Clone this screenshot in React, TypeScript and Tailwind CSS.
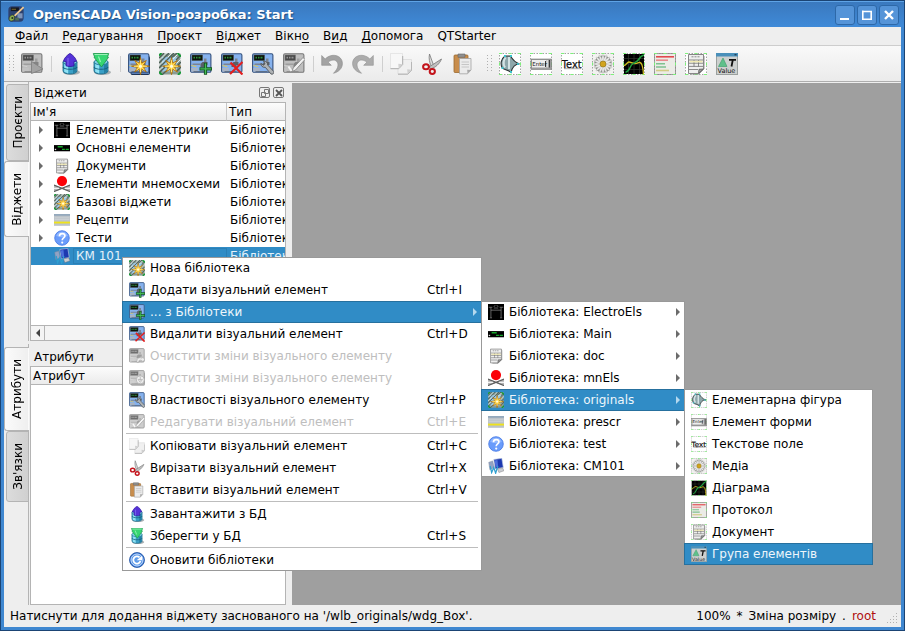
import React from "react";

type IconProps = { className?: string };

const GREEN = "#7df27a";

/* ---------- icon building blocks ---------- */

function Svg({ className = "size-4", children }: IconProps & { children: React.ReactNode }) {
  return (
    <svg viewBox="0 0 22 22" className={`shrink-0 ${className}`} aria-hidden="true">
      {children}
    </svg>
  );
}

function PanelArt() {
  return (
    <>
      <rect x="0.6" y="0.8" width="20.300" height="18.500" rx="1.400" fill="#86b2ee" stroke="#34507c" strokeWidth="1.100" />
      <path d="M1.300 15h6.500v3.700H1.300z" fill="#a9b4c4" />
      <path d="M1.300 12.500l5 1.200" stroke="#d8c860" strokeWidth="1" />
      <rect x="2" y="2" width="10.500" height="5.500" fill="#0c120c" stroke="#47524a" strokeWidth="0.6" />
      <path d="M3.500 4.700h1.500M6 4.700h1.500M8.500 4.700h2" stroke="#2c8f38" strokeWidth="1.800" />
      <path d="M12.500 9h5v3h-2v2h-5v-3z" fill="#5a6068" />
      <path d="M14 5.500h2.500V9H14zM2.500 10.500h8v1.500h-8z" fill="#7c8490" />
      <path d="M3.500 18.500h12" stroke="#5a6a80" strokeWidth="0.9" />
    </>
  );
}

function Star({ x = 12.5, y = 13.2 }: { x?: number; y?: number }) {
  return (
    <g transform={`translate(${x} ${y})`}>
      <path
        d="M0-8.800L1.300-3.100 5.800-5.800 3.100-1.300 9 0 3.100 1.300 5.800 5.800 1.300 3.100 0 8.500-1.300 3.100-5.800 5.800-3.100 1.300-9 0-3.100-1.300-5.800-5.800-1.300-3.100Z"
        fill="#fdc62f"
        stroke="#a8680a"
        strokeWidth="0.8"
      />
      <path d="M0-6V6M-6.500 0H6.500M-3.800-3.800l7.600 7.600M3.800-3.800l-7.600 7.600" stroke="#ffe878" strokeWidth="1" />
      <circle r="1.500" fill="#fffbe0" />
    </g>
  );
}

function Frame() {
  return (
    <>
      <rect x="0.5" y="0.5" width="21" height="21" fill="none" stroke="#a2a2a2" strokeDasharray="1.500 1.500" />
      <path d="M0 .5h3M19 .5h3M0 21.500h3M19 21.500h3M9.500.5h3M9.500 21.500h3M.5 9.500v3M21.500 9.500v3" stroke={GREEN} />
    </>
  );
}

/* ---------- icons ---------- */

const WidgetRun = (p: IconProps) => (
  <Svg {...p}>
    <PanelArt />
    <path d="M10.500 8.500l11.500 7.500-11.500 4.500z" fill="#8a8a8a" stroke="#5c5c5c" strokeWidth="0.9" />
  </Svg>
);

const Cylinder = () => (
  <>
    <ellipse cx="12.500" cy="19.300" rx="8.500" ry="2.700" fill="#a9b0b3" />
    <path d="M4 9v8.800c0 4.300 14 4.300 14 0V9z" fill="#3a9fc6" stroke="#17627f" strokeWidth="0.8" />
    <path d="M5.200 10.500v8.300l4 1.800v-8.500z" fill="#8fe2f4" />
    <path d="M14 12.300v8l3-1.300v-8z" fill="#2580a4" />
    <path d="M4 13.800c1 3.200 13 3.200 14 0" fill="none" stroke="#17627f" strokeWidth="1.100" />
    <ellipse cx="11" cy="9" rx="7" ry="2.800" fill="#7fd0e6" stroke="#1b6d8b" strokeWidth="0.8" />
  </>
);

const DbLoad = (p: IconProps) => (
  <Svg {...p}>
    <Cylinder />
    <path d="M11 .4C13.500 1.800 17 5 17.500 8.300L15 8.500v4.300c-2 .900-6 .900-8 0V8.500l-2.500-.200C5 5 8.500 1.800 11 .4z" fill="#5532d8" stroke="#2d1598" strokeWidth="0.8" />
    <path d="M9 5v7.500" stroke="#7a60ea" strokeWidth="1.300" />
  </Svg>
);

const DbSave = (p: IconProps) => (
  <Svg {...p}>
    <Cylinder />
    <path d="M3.300.500h15.400l-1.200 3.800h1L11.500 14 4 4.300h.700z" fill="#37d672" stroke="#1a9448" strokeWidth="0.8" />
    <path d="M4.500 1.500h13M8.500 3.500L10.500 9" stroke="#9cf2b8" strokeWidth="1.100" />
  </Svg>
);

const LibraryNew = (p: IconProps) => (
  <Svg {...p}>
    <rect x="3" y="3.500" width="18.500" height="18" rx="1" fill="#5a7fb8" stroke="#1f3557" />
    <PanelArt />
    <Star />
  </Svg>
);

const WidgetStar = (p: IconProps) => (
  <Svg {...p}>
    <rect x="0.5" y="0.5" width="21" height="21" fill="#8a9c94" />
    <rect x="3" y="4" width="15" height="14.500" fill="#9ac6e2" />
    <path d="M0 5l5-5M0 10L10 0M4 11L15 0M0 15l5-5M0 20l6-6M12 5l6-5M17 7l5-5M18 13l4-4M3 22l4-4M18 18l4-4" stroke="#4e6057" strokeWidth="1.300" />
    <path d="M0 7.500L7.500 0M0 12.500l5-5M9 4l4-4M14 6l6-6M18 10l4-4M0 17.500l4-4" stroke="#e8f0ea" strokeWidth="1" />
    <path d="M0 2.500L2.500 0M18.500 0L22 3.500M0 19l3 3M19 22l3-3" stroke="#149a34" strokeWidth="1.800" />
    <Star />
  </Svg>
);

const WidgetAdd = (p: IconProps) => (
  <Svg {...p}>
    <PanelArt />
    <path d="M15.500 9.800v12M9.500 15.800h12.500" stroke="#12561f" strokeWidth="3.200" />
    <path d="M15.500 10.600v10.400M10.300 15.800h10.900" stroke="#45bd56" strokeWidth="1.300" />
  </Svg>
);

const WidgetDelete = (p: IconProps) => (
  <Svg {...p}>
    <PanelArt />
    <path d="M9.500 9.500l12 12M21.500 9L9 21" stroke="#e21f1f" strokeWidth="2.200" />
  </Svg>
);

const WidgetProps = (p: IconProps) => (
  <Svg {...p}>
    <PanelArt />
    <path
      d="M11.500 8.300c2.500-.6 4.300 1.200 4.200 3.700l6 6.500c.9 1.600-1.300 3.600-2.800 2.400l-5.600-6.600c-2.500.4-4.600-1.300-4.400-3.900l2.500 1.800 1.600-1.400z"
      fill="#aeb2b5"
      stroke="#4f5458"
      strokeWidth="0.9"
    />
  </Svg>
);

const WidgetEdit = (p: IconProps) => (
  <Svg {...p}>
    <PanelArt />
    <path d="M20 4.500L22 6.500 12.500 17l-3.500 1.500 1.200-3.500z" fill="#f0f0f0" stroke="#666" strokeWidth="0.9" />
    <path d="M5.500 13.500l3 4.500" fill="none" stroke="#f5f5f5" strokeWidth="2" />
  </Svg>
);

const WidgetClear = (p: IconProps) => (
  <Svg {...p}>
    <PanelArt />
    <path d="M11 20c-1-5 2-8 7-6l1-2 3 5-5 2 .5-2c-3-1-4.500 0-4 3z" fill="#e3e3e3" stroke="#777" strokeWidth="0.9" />
  </Svg>
);

const WidgetDown = (p: IconProps) => (
  <Svg {...p}>
    <rect x="3" y="4" width="18.500" height="17" rx="1" fill="#999" stroke="#555" />
    <PanelArt />
    <circle cx="15.500" cy="13.500" r="5.500" fill="#e6e6e6" stroke="#777" />
    <path d="M15.500 9v6M12.500 13l3 4 3-4z" fill="#fff" stroke="#888" strokeWidth="1.200" />
  </Svg>
);

const UNDO_PATH =
  "M.7 2.500v9.800h9.600L7.200 9.300C10.800 5.600 17 6.500 17 12c0 3-2 5.700-4.500 8.300 5-1.300 9-4.800 8.900-10C21.200 2.200 10.500-.6 4.200 6z";

const Undo = (p: IconProps) => (
  <Svg {...p}>
    <path d={UNDO_PATH} fill="#a3a3a3" stroke="#8a8a8a" strokeWidth="0.6" />
  </Svg>
);

const Redo = (p: IconProps) => (
  <Svg {...p}>
    <g transform="translate(22 0) scale(-1 1)">
      <path d={UNDO_PATH} fill="#acacac" stroke="#909090" strokeWidth="0.6" />
    </g>
  </Svg>
);

const Copy = (p: IconProps) => (
  <Svg {...p}>
    <path d="M8 6.500h13.500v10.500L17.500 21H8z" fill="#f0f0f0" stroke="#d8d8d8" strokeWidth="0.7" />
    <path d="M8 21.200h9.800l3.900-4.200V9" fill="none" stroke="#a8a8a8" strokeWidth="0.9" />
    <path d="M21.500 16.800l-4.300-.6.400 4.700z" fill="#cfcfcf" />
    <path d="M.5.500h12v11L8.500 15.500h-8z" fill="#f7f7f7" stroke="#dedede" strokeWidth="0.7" />
    <path d="M.5 15.700h8.300l3.900-4.200V3" fill="none" stroke="#a8a8a8" strokeWidth="0.9" />
    <path d="M12.500 11.200l-4.200-.5.300 4.700z" fill="#d2d2d2" />
  </Svg>
);

const Cut = (p: IconProps) => (
  <Svg {...p}>
    <path d="M8.500 1l4 11-1.700 2.500C8.500 10.500 7.500 5 8.500 1z" fill="#d9d9d9" stroke="#777" strokeWidth="0.8" />
    <path d="M20.500 6L8 14l2 1.700C14.500 14.500 18.500 11 20.500 6z" fill="#c0c0c0" stroke="#777" strokeWidth="0.8" />
    <ellipse cx="5" cy="13.800" rx="2.900" ry="2.500" fill="none" stroke="#c3131b" strokeWidth="2" />
    <ellipse cx="11.300" cy="18.500" rx="2.600" ry="2.400" fill="none" stroke="#c3131b" strokeWidth="2" />
  </Svg>
);

const Paste = (p: IconProps) => (
  <Svg {...p}>
    <rect x="2" y="2" width="14" height="17.500" rx="1" fill="#c88d4c" stroke="#9a6a30" strokeWidth="0.8" />
    <path d="M6 1h7v3.300H6z" fill="#8f8f8f" stroke="#666" strokeWidth="0.6" />
    <path d="M7.500 5.500H19V17l-3.500 3.800h-8z" fill="#ebebeb" stroke="#a2a2a2" strokeWidth="0.8" />
    <path d="M9.500 9h7.500M9.500 11.500h7.500M9.500 14h7.500" stroke="#c6c6c6" />
    <path d="M19 17l-3.800-.2.300 4z" fill="#a8a8a8" />
  </Svg>
);

const ElFigure = (p: IconProps) => (
  <Svg {...p}>
    <rect width="22" height="22" fill="#fff" />
    <Frame />
    <path d="M6 3h5.500c2 3.500 4.500 6.500 9 8-4.500 0-7 2-8.500 8.500C9 16.500 5 17 3.300 15 1 11 2 6 6 3z" fill="#8ea6aa" stroke="#2b3335" strokeWidth="1.100" />
    <path d="M6.500 4.500C4 8 4.500 12 6 14.500M10 4v12" fill="none" stroke="#d4e3e5" strokeWidth="2" />
    <path d="M5 3h2M11 3h2M19 10v2M11 19h2M2.500 15h2" stroke="#3cc3cc" strokeWidth="1.800" />
  </Svg>
);

const FormEl = (p: IconProps) => (
  <Svg {...p}>
    <rect width="22" height="22" fill="#fff" />
    <Frame />
    <rect x="1" y="6" width="20.500" height="10.500" fill="#9c9c9c" stroke="#777" strokeWidth="0.6" />
    <rect x="2" y="7" width="14.500" height="7.500" fill="#ededed" />
    <path d="M17.500 7v7.500" stroke="#dcdcdc" strokeWidth="1.200" />
    <path d="M19.500 7v7.500M15.500 8v6" stroke="#3c3c3c" />
    <text x="2.200" y="13" fontSize="5.500" fontFamily="DejaVu Sans" fill="#111">Enter</text>
  </Svg>
);

const TextField = (p: IconProps) => (
  <Svg {...p}>
    <rect width="22" height="22" fill="#fff" />
    <Frame />
    <path d="M3 15.500h17" stroke="#bdbdbd" strokeWidth="1.500" />
    <text x="0.8" y="14.500" fontSize="9.800" fontFamily="DejaVu Sans" fill="#111" stroke="#111" strokeWidth="0.25">Text</text>
  </Svg>
);

const Media = (p: IconProps) => (
  <Svg {...p}>
    <rect width="22" height="22" fill="#f2f2f0" />
    <Frame />
    <circle cx="11" cy="11" r="8.800" fill="#8e8f8b" />
    {[0, 22, 45, 67, 90, 112, 135, 157].map((a) => (
      <ellipse key={a} cx="11" cy="11" rx="9.800" ry="1.300" fill="#ececec" stroke="#a5a5a2" strokeWidth="0.3" transform={`rotate(${a} 11 11)`} />
    ))}
    <circle cx="11" cy="11" r="3" fill="#d2a41e" stroke="#93771c" strokeWidth="0.7" />
  </Svg>
);

const Diagram = (p: IconProps) => (
  <Svg {...p}>
    <rect width="22" height="22" fill="#fff" />
    <rect x="1" y="1" width="20" height="20" fill="#000" />
    <path d="M5.500 1v20M11 1v20M16.500 1v20M1 5.500h20M1 11h20M1 16.500h20" stroke="#2f332b" strokeWidth="0.7" />
    <Frame />
    <path d="M1 12.500c2 0 3-3.500 5-3.500s3 1.500 6 1.500 3-1.500 5-1 3 3 3.500 12" fill="none" stroke="#cdbb22" strokeWidth="1.300" />
    <path d="M2.500 19c4 .500 4-6 7-8s5-2.500 6.500-5 3-3.500 5-4" fill="none" stroke="#1fa040" strokeWidth="1.500" />
  </Svg>
);

const Protocol = (p: IconProps) => (
  <Svg {...p}>
    <rect x="0.5" y="0.5" width="21" height="21" fill="#ebebe6" stroke="#8e8e8a" />
    <Frame />
    <path d="M2 3.800h18" stroke="#e2484e" strokeWidth="1.600" />
    <path d="M2 7.200h12" stroke="#e88a8e" strokeWidth="1.600" />
    <path d="M2 10.700h9M2 14h10" stroke="#7fc190" strokeWidth="1.600" />
    <path d="M2 17.500h13" stroke="#d2cc85" strokeWidth="1.600" />
  </Svg>
);

const SheetArt = () => (
  <>
    <path d="M3.500 1.500h15v14.500l-5 4.500h-10z" fill="#efefef" stroke="#777" strokeWidth="0.9" />
    <path d="M6.500 3.800h8" stroke="#888" strokeDasharray="2 1" />
    <path d="M4 7h14M4 10.200h14M4 13.400h14M9 7v6.500M13.500 7v6.500M4 16.500h9" stroke="#6e6e6e" strokeWidth="0.8" />
    <path d="M4.500 8.600h13" stroke="#f1eab2" strokeWidth="1.600" />
    <path d="M18.500 16l-4.500.300-.500 4.200z" fill="#9c9c9c" stroke="#555" strokeWidth="0.8" />
    <path d="M19 3v13l-5 5H6" fill="none" stroke="#8d8d8d" strokeWidth="0.9" />
  </>
);

const DocumentFramed = (p: IconProps) => (
  <Svg {...p}>
    <rect width="22" height="22" fill="#fff" />
    <Frame />
    <SheetArt />
  </Svg>
);

const DocumentPlain = (p: IconProps) => (
  <Svg {...p}>
    <SheetArt />
  </Svg>
);

const Group = (p: IconProps) => (
  <Svg {...p}>
    <rect x="0.5" y="0.5" width="21" height="21" fill="#cdd0cf" stroke="#9aa09e" />
    <path d="M0 0h22v3.500H0z" fill="#4a90ba" />
    <path d="M18.500 1.800h2" stroke="#123" />
    <path d="M2.500 13.500L7 5l4 8.500z" fill="#5fc08a" stroke="#3b9a68" strokeWidth="0.6" />
    <path d="M13 6.800h7M16.800 6.800L15.500 13.500" stroke="#111" strokeWidth="1.800" />
    <text x="1.500" y="20.300" fontSize="6.500" fontFamily="DejaVu Sans" fill="#111">Value</text>
  </Svg>
);

const Electro = (p: IconProps) => (
  <Svg {...p}>
    <rect width="22" height="22" fill="#000" />
    <path d="M1 4.500h5M16 4.500h5M4 4.500v14M18 4.500v14M2.500 19h3M16.500 19h3M8 4l2-2.500M14 4l-2-2.500M4 8.500h14M8 5.500h6" stroke="#a5a5a5" strokeWidth="0.800" fill="none" />
  </Svg>
);

const MainEls = (p: IconProps) => (
  <Svg {...p}>
    <rect y="7" width="22" height="8.500" fill="#000" />
    <path d="M5 9.300h7M11 13h4M16 13h4.500" stroke="#17a52a" strokeWidth="1.800" />
    <path d="M1 13h2" stroke="#ddd" strokeWidth="1.800" />
  </Svg>
);

const Mnemo = (p: IconProps) => (
  <Svg {...p}>
    <path d="M0 12.500l11 3.500 11-3.500v9L11 18 0 21.500z" fill="#b4b4b4" />
    <path d="M0 12.500l22 9M22 12.500l-22 9" stroke="#5d5d5d" strokeWidth="1.500" />
    <path d="M0 17h7M15 17h7" stroke="#f2f2f2" strokeWidth="1.500" />
    <circle cx="11" cy="7" r="7" fill="#fb0007" />
  </Svg>
);

const Recipes = (p: IconProps) => (
  <Svg {...p}>
    <rect y="3" width="22" height="16" fill="#bcc3c9" />
    <path d="M0 4h22" stroke="#88a1b8" strokeWidth="2" />
    <path d="M1 8h20M1 10.500h20" stroke="#d2d6d9" strokeWidth="1" />
    <path d="M0 14.500h22" stroke="#efe21c" strokeWidth="2.600" />
  </Svg>
);

const Question = (p: IconProps) => (
  <Svg {...p}>
    <circle cx="11" cy="11" r="10" fill="#6a9cfb" stroke="#4a7ce6" strokeWidth="1.200" />
    <path d="M3 8a8.500 8.500 0 0 1 16 0c-4 2.500-12 2.500-16 0z" fill="#8fb6ff" />
    <path d="M7.500 8.500c0-5 7.500-4.500 7.500-.5 0 3-3.700 2.800-3.700 6" fill="none" stroke="#fff" strokeWidth="2.300" />
    <circle cx="11.300" cy="17.300" r="1.500" fill="#fff" />
  </Svg>
);

const Cm101 = (p: IconProps) => (
  <Svg {...p}>
    <path d="M8 2l11-1.500L21 13l-11 2z" fill="#1d39b0" stroke="#b9c4e0" strokeWidth="0.9" />
    <path d="M9 3.500l4-.6 1 9-3.500.600z" fill="#4d6fdc" />
    <path d="M13 15l7-1.500 2 4-7 2.500z" fill="#c9ccd2" stroke="#777" strokeWidth="0.6" />
    <path d="M1 6l5.500-2 2 9-6 3z" fill="#93a3c4" stroke="#7c8698" strokeWidth="0.6" />
    <path d="M3 11l2 9 3-7 2.500 8 3-10" fill="none" stroke="#2f9fd0" strokeWidth="1.700" />
  </Svg>
);

const Refresh = (p: IconProps) => (
  <Svg {...p}>
    <circle cx="11" cy="11" r="10.300" fill="#2b6fd0" stroke="#174a9c" />
    <circle cx="11" cy="11" r="8.300" fill="#5d9bea" stroke="#dfeaff" strokeWidth="1.200" />
    <path d="M14.500 7.500A5 5 0 1 0 15.700 12.500" fill="none" stroke="#fff" strokeWidth="2.500" />
    <path d="M10.500 11.500h7.500V5z" fill="#fff" />
  </Svg>
);

const AppLogo = (p: IconProps) => (
  <Svg {...p}>
    <rect x="0.5" y="0.5" width="21" height="21" rx="5" fill="#2c4170" />
    <rect x="4" y="2" width="11" height="5" fill="#15181f" />
    <path d="M5 4.500h6" stroke="#a08a3a" />
    <path d="M13 10h7v7h-7z" fill="#7d93b8" />
    <path d="M21.500 1.500L9 13.500" stroke="#f0c890" strokeWidth="2.500" />
    <path d="M2 20c-1.500-4 1-8 5.500-7.500L9 15c.5 4-3 7-7 5z" fill="#8fae50" stroke="#26331a" strokeWidth="0.8" />
    <circle cx="6" cy="16.500" r="1.500" fill="#25302a" />
    <path d="M10 16h5v4h-5z" fill="#4c6a58" />
  </Svg>
);

function Arrow({ className = "text-[#6b6b6b]" }: IconProps) {
  return (
    <svg viewBox="0 0 4 8" className={`h-2 w-1 shrink-0 ${className}`} aria-hidden="true">
      <path d="M0 0l4 4-4 4z" fill="currentColor" />
    </svg>
  );
}

/* ---------- data ---------- */

type Icon = (p: IconProps) => React.ReactElement;

const menuBar: [string, string, string][] = [
  ["", "Ф", "айл"],
  ["", "Р", "едагування"],
  ["", "П", "роєкт"],
  ["", "В", "іджет"],
  ["Вікн", "о", ""],
  ["В", "и", "д"],
  ["", "Д", "опомога"],
  ["QTStarter", "", ""],
];

type Tool = { icon: Icon; label: string; off?: boolean };

const toolGroups: Tool[][] = [
  [{ icon: WidgetRun, label: "Виконати", off: true }],
  [
    { icon: DbLoad, label: "Завантажити з БД" },
    { icon: DbSave, label: "Зберегти у БД" },
  ],
  [
    { icon: LibraryNew, label: "Новий проєкт" },
    { icon: WidgetStar, label: "Нова бібліотека" },
    { icon: WidgetAdd, label: "Додати візуальний елемент" },
    { icon: WidgetDelete, label: "Видалити візуальний елемент" },
    { icon: WidgetProps, label: "Властивості" },
    { icon: WidgetEdit, label: "Редагувати", off: true },
  ],
  [
    { icon: Undo, label: "Відмінити" },
    { icon: Redo, label: "Повторити" },
  ],
  [
    { icon: Copy, label: "Копіювати" },
    { icon: Cut, label: "Вирізати" },
    { icon: Paste, label: "Вставити" },
  ],
];

const originals: Tool[] = [
  { icon: ElFigure, label: "Елементарна фігура" },
  { icon: FormEl, label: "Елемент форми" },
  { icon: TextField, label: "Текстове поле" },
  { icon: Media, label: "Медіа" },
  { icon: Diagram, label: "Діаграма" },
  { icon: Protocol, label: "Протокол" },
  { icon: DocumentFramed, label: "Документ" },
  { icon: Group, label: "Група елементів" },
];

const treeRows: Tool[] = [
  { icon: Electro, label: "Елементи електрики" },
  { icon: MainEls, label: "Основні елементи" },
  { icon: DocumentPlain, label: "Документи" },
  { icon: Mnemo, label: "Елементи мнемосхеми" },
  { icon: WidgetStar, label: "Базові віджети" },
  { icon: Recipes, label: "Рецепти" },
  { icon: Question, label: "Тести" },
  { icon: Cm101, label: "КМ 101" },
];

type Entry = { icon: Icon; label: string; keys?: string; off?: boolean; sub?: boolean; selected?: boolean };

const contextMenu: Entry[][] = [
  [
    { icon: WidgetStar, label: "Нова бібліотека" },
    { icon: WidgetAdd, label: "Додати візуальний елемент", keys: "Ctrl+I" },
    { icon: WidgetAdd, label: "... з Бібліотеки", sub: true, selected: true },
    { icon: WidgetDelete, label: "Видалити візуальний елемент", keys: "Ctrl+D" },
    { icon: WidgetClear, label: "Очистити зміни візуального елементу", off: true },
    { icon: WidgetDown, label: "Опустити зміни візуального елементу", off: true },
    { icon: WidgetProps, label: "Властивості візуального елементу", keys: "Ctrl+P" },
    { icon: WidgetEdit, label: "Редагувати візуальний елемент", keys: "Ctrl+E", off: true },
  ],
  [
    { icon: Copy, label: "Копіювати візуальний елемент", keys: "Ctrl+C" },
    { icon: Cut, label: "Вирізати візуальний елемент", keys: "Ctrl+X" },
    { icon: Paste, label: "Вставити візуальний елемент", keys: "Ctrl+V" },
  ],
  [
    { icon: DbLoad, label: "Завантажити з БД" },
    { icon: DbSave, label: "Зберегти у БД", keys: "Ctrl+S" },
  ],
  [{ icon: Refresh, label: "Оновити бібліотеки" }],
];

const libraryMenu: Entry[][] = [
  [
    { icon: Electro, label: "Бібліотека: ElectroEls", sub: true },
    { icon: MainEls, label: "Бібліотека: Main", sub: true },
    { icon: DocumentPlain, label: "Бібліотека: doc", sub: true },
    { icon: Mnemo, label: "Бібліотека: mnEls", sub: true },
    { icon: WidgetStar, label: "Бібліотека: originals", sub: true, selected: true },
    { icon: Recipes, label: "Бібліотека: prescr", sub: true },
    { icon: Question, label: "Бібліотека: test", sub: true },
    { icon: Cm101, label: "Бібліотека: СМ101", sub: true },
  ],
];

const originalsMenu: Entry[][] = [
  originals.map((o) => ({ ...o, selected: o.label === "Група елементів" })),
];

/* ---------- widgets ---------- */

function Menu({ groups, className, label }: { groups: Entry[][]; className: string; label: string }) {
  return (
    <div
      role="menu"
      aria-label={label}
      className={`absolute bg-white shadow-[inset_0_0_0_1px_#999] ${className}`}
    >
      {groups.map((group, g) => (
        <div key={g}>
          {g > 0 && <div role="separator" className="mx-1 h-0.5 border-t border-[#bdbdbd]" />}
          {group.map((e) => (
            <button
              key={e.label}
              role="menuitem"
              disabled={e.off}
              className={`flex h-[22px] w-full items-center gap-[5px] pr-[5px] pl-[7px] text-left whitespace-nowrap ${
                e.selected
                  ? "bg-[#308cc6] text-[#eef6fb] shadow-[inset_0_0_0_1px_#26709e]"
                  : e.off
                    ? "text-[#bebebe]"
                    : "text-black"
              }`}
            >
              <e.icon className={e.off ? "size-4 opacity-60 grayscale" : "size-4"} />
              <span className="flex-1">{e.label}</span>
              {e.keys && <span className="w-[50px]">{e.keys}</span>}
              {e.sub && <Arrow className={e.selected ? "text-[#b4d8ee]" : "text-[#6b6b6b]"} />}
            </button>
          ))}
        </div>
      ))}
    </div>
  );
}

function Grip() {
  return (
    <svg className="h-[18px] w-[5px] shrink-0" aria-hidden="true">
      {[0, 3, 6, 9, 12, 15].map((y) => (
        <path key={y} d={`M0 ${y + 0.5}h1M4 ${y + 0.5}h1`} stroke="#b0b0b0" />
      ))}
    </svg>
  );
}

function ToolButton({ tool }: { tool: Tool }) {
  return (
    <button aria-label={tool.label} disabled={tool.off} className="flex h-[30px] w-[30px] shrink-0 items-center justify-center">
      <tool.icon className={tool.off ? "size-[22px] opacity-75 grayscale" : "size-[22px]"} />
    </button>
  );
}

function SideTab({ label, active, className }: { label: string; active?: boolean; className: string }) {
  return (
    <button
      role="tab"
      aria-selected={!!active}
      className={`flex items-center justify-center rounded-l-[3px] border border-[#b4b4b4] ${
        active
          ? "w-[25px] border-r-transparent bg-linear-to-r from-[#fbfbfb] to-[#efefef]"
          : "ml-0.5 w-[23px] bg-linear-to-r from-[#dcdcdc] to-[#d0d0d0]"
      } ${className}`}
    >
      <span className="rotate-180 [writing-mode:vertical-rl]">{label}</span>
    </button>
  );
}

const headCell = "truncate border-b border-[#b4b4b4] bg-linear-to-b from-[#fcfcfc] to-[#ebebeb] p-0 pl-0.5 text-left font-normal";

export default function App() {
  return (
    <div className="relative flex h-screen min-h-[600px] flex-col overflow-hidden border border-[#1b4474] bg-[#3f87d0] px-[3px] pb-[3px] font-['DejaVu_Sans',sans-serif] text-[12px] leading-4 text-black">
      <header className="-mx-[3px] flex h-[26px] shrink-0 items-center bg-linear-to-b from-[#3a78bd] to-[#3f8ad8] pr-[5px] pl-[7px] shadow-[inset_0_1px_0_#5ea3e6]">
        <AppLogo className="size-4" />
        <h1 className="ml-[9px] flex-1 pt-0.5 text-[13px] font-bold text-white [text-shadow:1px_1px_1px_#1d4c80]">
          OpenSCADA Vision-розробка: Start
        </h1>
        <div className="flex gap-0.5 pt-0.5">
          {["min", "max", "close"].map((kind) => (
            <button
              key={kind}
              aria-label={kind}
              className="flex size-5 items-center justify-center rounded-[3px] border border-[#2d68a8] bg-[#5594d8]"
            >
              <svg viewBox="0 0 10 10" className="size-2.5" aria-hidden="true">
                {kind === "min" && <path d="M0 9h9" stroke="#fff" strokeWidth="2" />}
                {kind === "max" && <path d="M.800.500v8.700h8.400V1.500H.800" stroke="#fff" strokeWidth="1.600" fill="none" />}
                {kind === "close" && <path d="M1 1l8 8M9 1l-8 8" stroke="#fff" strokeWidth="2.400" />}
              </svg>
            </button>
          ))}
        </div>
      </header>

      <nav className="flex h-[19px] shrink-0 items-center border-b border-[#cdcdcd] bg-[#eeeeee] pl-1">
        {menuBar.map(([before, key, after]) => (
          <button key={before + key + after} className="px-[7px] whitespace-nowrap">
            {before}
            <span className="underline underline-offset-2">{key}</span>
            {after}
          </button>
        ))}
      </nav>

      <div role="toolbar" className="flex h-9 shrink-0 items-center gap-px border-b border-[#adadad] bg-linear-to-b from-[#f9f9f9] to-[#ebebeb] pl-[5px]">
        <Grip />
        <div className="ml-0.5 flex gap-px">
          {toolGroups.map((group, g) => (
            <React.Fragment key={g}>
              {g > 0 && (
                <div className="flex w-1.5 items-center justify-center">
                  <div className="h-4 w-px bg-[#cfcfcf]" />
                </div>
              )}
              {group.map((t) => (
                <ToolButton key={t.label} tool={t} />
              ))}
            </React.Fragment>
          ))}
        </div>
        <div className="ml-2 flex items-center gap-[3px]">
          <Grip />
          <div className="flex gap-px">
            {originals.map((t) => (
              <ToolButton key={t.label} tool={t} />
            ))}
          </div>
        </div>
      </div>

      <main className="flex min-h-0 flex-1 bg-[#eeeeee]">
        <aside className="flex w-72 shrink-0 flex-col">
          <section className="flex h-[262px] shrink-0 pb-[3px]">
            <div role="tablist" className="w-[25px] shrink-0 border-r border-[#b4b4b4] pt-0.5">
              <SideTab label="Проєкти" className="h-[77px]" />
              <SideTab label="Віджети" active className="h-[76px]" />
            </div>
            <div className="ml-px flex w-64 flex-col">
              <div className="flex h-5 items-center justify-between pt-px pl-1">
                <h2>Віджети</h2>
                <div className="flex gap-[3px] pr-0.5">
                  {["float", "close"].map((kind) => (
                    <button key={kind} aria-label={kind} className="flex size-[11px] items-center justify-center rounded-xs border border-[#777]">
                      <svg viewBox="0 0 8 8" className="size-2 shrink-0" aria-hidden="true">
                        {kind === "float" ? (
                          <path d="M3.500.500h4v4h-4zM.500 3.500h4v4h-4z" fill="none" stroke="#777" />
                        ) : (
                          <path d="M1 1l6 6M7 1L1 7" stroke="#555" strokeWidth="1.800" />
                        )}
                      </svg>
                    </button>
                  ))}
                </div>
              </div>
              <div className="flex min-h-0 flex-1 flex-col border border-[#b4b4b4] bg-white">
                <table className="w-full table-fixed border-separate border-spacing-0">
                  <thead>
                    <tr className="h-[18px]">
                      <th className={`${headCell} w-[196px] border-r border-r-[#c8c8c8]`}>Ім'я</th>
                      <th className={headCell}>Тип</th>
                    </tr>
                  </thead>
                  <tbody>
                    {treeRows.map((r) => {
                      const selected = r.label === "КМ 101";
                      return (
                        <tr key={r.label} className={`h-[18px] ${selected ? "bg-[#308cc6] text-[#e4f1f9]" : ""}`}>
                          <td className="p-0">
                            <div className="flex h-[18px] items-center pl-2 whitespace-nowrap">
                              <Arrow className={selected ? "invisible" : "text-[#6b6b6b]"} />
                              <r.icon className="mr-[3px] ml-[11px] size-4" />
                              <span className={`flex-1 pl-[3px] ${selected ? "shadow-[inset_0_0_0_1px_#2a7fb5]" : ""}`}>{r.label}</span>
                            </div>
                          </td>
                          <td className="overflow-hidden p-0 pl-[3px] whitespace-nowrap">Бібліотека</td>
                        </tr>
                      );
                    })}
                  </tbody>
                </table>
                <div className="mt-auto flex h-[15px] border-t border-[#b4b4b4] bg-[#e4e4e4]">
                  <button aria-label="Прокрутити ліворуч" className="flex w-3.5 items-center justify-center border-r border-[#b4b4b4] bg-[#f4f4f4]">
                    <Arrow className="rotate-180 text-[#444]" />
                  </button>
                  <div className="flex-1 bg-[#f4f4f4]" />
                </div>
              </div>
            </div>
          </section>

          <section className="flex min-h-0 flex-1">
            <div role="tablist" className="w-[25px] shrink-0 border-r border-[#b4b4b4] pt-[3px]">
              <SideTab label="Атрибути" active className="h-[84px]" />
              <SideTab label="Зв'язки" className="h-[71px]" />
            </div>
            <div className="ml-px flex w-64 flex-col pt-[3px]">
              <h2 className="h-[19px] pt-0.5 pl-1">Атрибути</h2>
              <div className="flex-1 border border-[#b4b4b4] bg-white">
                <table className="w-full border-separate border-spacing-0">
                  <thead>
                    <tr className="h-[18px]">
                      <th className={headCell}>Атрибут</th>
                    </tr>
                  </thead>
                </table>
              </div>
            </div>
          </section>
        </aside>
        <div className="mt-px flex-1 bg-[#9f9f9f]" />
      </main>

      <footer className="relative flex h-[22px] shrink-0 items-center bg-[#eeeeee] pl-1.5">
        <span className="flex-1 truncate">Натиснути для додання віджету заснованого на '/wlb_originals/wdg_Box'.</span>
        <div className="flex gap-1.5 pr-[25px]">
          <span>100%</span>
          <span>*</span>
          <span>Зміна розміру</span>
          <span>.</span>
          <span className="text-[#b00f0f]">root</span>
        </div>
        <svg className="absolute right-0.5 bottom-0.5 size-3" aria-hidden="true">
          {[0, 1, 2, 3].map((r) =>
            Array.from({ length: r + 1 }, (_, c) => (
              <rect key={`${r}-${c}`} x={9 - c * 3} y={r * 3} width="1" height="1" fill="#b0b0b0" />
            )),
          )}
        </svg>
      </footer>

      <Menu groups={contextMenu} label="Контекстне меню" className="top-[256px] left-[121px] w-[360px]" />
      <Menu groups={libraryMenu} label="Бібліотеки" className="top-[300px] left-[480px] w-[204px]" />
      <Menu groups={originalsMenu} label="Примітиви" className="top-[388px] left-[683px] w-[189px]" />
    </div>
  );
}
